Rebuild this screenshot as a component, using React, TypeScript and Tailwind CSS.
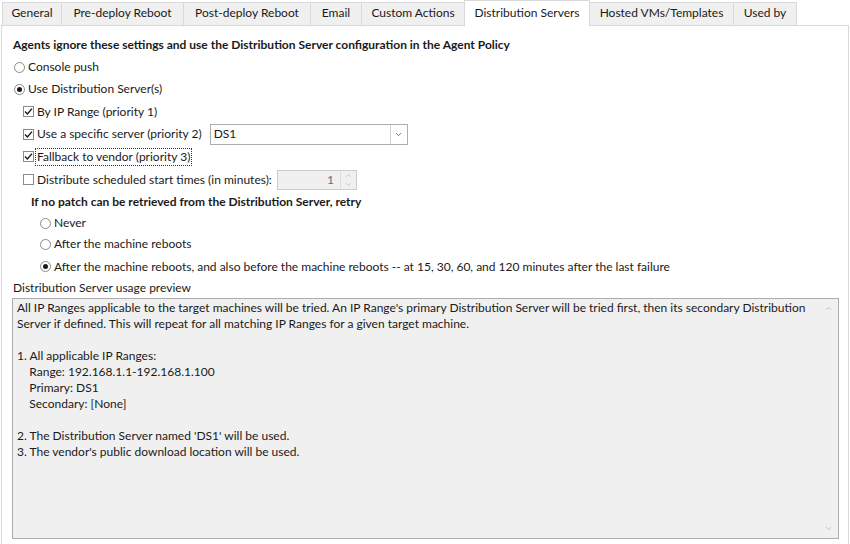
import { ChevronDown, ChevronUp } from "lucide-react"

const tabs = [
  { label: "General", w: "w-[60px]" },
  { label: "Pre-deploy Reboot", w: "w-[123px]" },
  { label: "Post-deploy Reboot", w: "w-[128px]" },
  { label: "Email", w: "w-[52px]" },
  { label: "Custom Actions", w: "w-[104px]" },
  { label: "Distribution Servers", w: "w-[126px]", active: true },
  { label: "Hosted VMs/Templates", w: "w-[145px]" },
  { label: "Used by", w: "w-[64px]" },
]

function Radio({ checked }: { checked?: boolean }) {
  return (
    <span className="flex h-[11px] w-[11px] shrink-0 items-center justify-center rounded-full border border-[#8a8a8a] bg-white">
      {checked && <span className="h-[5px] w-[5px] rounded-full bg-[#1a1a1a]" />}
    </span>
  )
}

function Check({ checked }: { checked?: boolean }) {
  return (
    <span className="flex h-[11px] w-[11px] shrink-0 items-center justify-center border border-[#8a8a8a] bg-white">
      {checked && (
        <svg width="9" height="9" viewBox="0 0 9 9">
          <path d="M1 4.6 L3.4 7 L8 1.6" fill="none" stroke="#1a1a1a" strokeWidth="1.4" />
        </svg>
      )}
    </span>
  )
}

const previewLines = [
  "All IP Ranges applicable to the target machines will be tried. An IP Range's primary Distribution Server will be tried first, then its secondary Distribution",
  "Server if defined. This will repeat for all matching IP Ranges for a given target machine.",
  "",
  "1. All applicable IP Ranges:",
  "    Range: 192.168.1.1-192.168.1.100",
  "    Primary: DS1",
  "    Secondary: [None]",
  "",
  "2. The Distribution Server named 'DS1' will be used.",
  "3. The vendor's public download location will be used.",
]

export default function App() {
  return (
    <div className="h-[544px] w-[850px] overflow-hidden bg-white text-[12px] text-[#1a1a1a] [font-family:Lato,'Liberation_Sans',sans-serif]">
      {/* Tabs */}
      <div className="flex h-[26px] items-end pl-[3px]">
        {tabs.map((t) =>
          t.active ? (
            <div
              key={t.label}
              className={`relative z-10 -ml-px flex h-[26px] items-start justify-center border border-b-0 border-[#d9d9d9] bg-white pt-[3px] ${t.w}`}
            >
              {t.label}
            </div>
          ) : (
            <div
              key={t.label}
              className={`-ml-px flex h-[24px] items-center justify-center border border-[#d9d9d9] bg-[#f0f0f0] pb-[2px] ${t.w}`}
            >
              {t.label}
            </div>
          )
        )}
      </div>

      {/* Panel */}
      <div className="-mt-px ml-px h-[600px] w-[848px] border border-[#d9d9d9] bg-white pt-[8px]">
        <div className="flex h-[22px] items-center pl-[11px] font-bold">
          Agents ignore these settings and use the Distribution Server configuration in the Agent Policy
        </div>
        <div className="flex h-[22px] items-center gap-[3px] pl-[12px]">
          <Radio />
          <span>Console push</span>
        </div>
        <div className="flex h-[22px] items-center gap-[3px] pl-[12px]">
          <Radio checked />
          <span>Use Distribution Server(s)</span>
        </div>
        <div className="flex h-[23px] items-center gap-[3px] pl-[21px]">
          <Check checked />
          <span>By IP Range (priority 1)</span>
        </div>
        <div className="flex h-[22px] items-center gap-[3px] pl-[21px]">
          <Check checked />
          <span>Use a specific server (priority 2)</span>
          <div className="ml-[5px] flex h-[21px] w-[198px] items-center border border-[#adadad] bg-white">
            <span className="flex-1 pl-[3px]">DS1</span>
            <span className="flex h-full w-[17px] items-center justify-center border-l border-[#d4d4d4]">
              <ChevronDown size={9} strokeWidth={2.5} className="text-[#6d6d6d]" />
            </span>
          </div>
        </div>
        <div className="flex h-[23px] items-center gap-[1px] pl-[21px]">
          <Check checked />
          <span className="border border-dotted border-[#333] px-[1px] leading-[16px]">Fallback to vendor (priority 3)</span>
        </div>
        <div className="flex h-[23px] items-center gap-[3px] pl-[21px]">
          <Check />
          <span>Distribute scheduled start times (in minutes):</span>
          <div className="ml-[2px] flex h-[20px] w-[80px] items-center border border-[#cccccc] bg-[#f0f0f0]">
            <span className="flex-1 pr-[6px] text-right text-[#6d6d6d]">1</span>
            <span className="flex h-full w-[16px] flex-col border-l border-[#dcdcdc]">
              <span className="flex flex-1 items-center justify-center">
                <ChevronUp size={7} strokeWidth={2.5} className="text-[#b5b5b5]" />
              </span>
              <span className="flex flex-1 items-center justify-center">
                <ChevronDown size={7} strokeWidth={2.5} className="text-[#b5b5b5]" />
              </span>
            </span>
          </div>
        </div>
        <div className="flex h-[22px] items-center pl-[29px] font-bold">
          If no patch can be retrieved from the Distribution Server, retry
        </div>
        <div className="flex h-[20px] items-center gap-[3px] pl-[38px]">
          <Radio />
          <span>Never</span>
        </div>
        <div className="flex h-[22px] items-center gap-[3px] pl-[38px]">
          <Radio />
          <span>After the machine reboots</span>
        </div>
        <div className="flex h-[23px] items-center gap-[3px] pl-[38px]">
          <Radio checked />
          <span>After the machine reboots, and also before the machine reboots -- at 15, 30, 60, and 120 minutes after the last failure</span>
        </div>
        <div className="flex h-[20px] items-center pl-[11px]">Distribution Server usage preview</div>

        {/* Preview box */}
        <div className="relative ml-[10px] h-[241px] w-[827px] border border-[#adadad] bg-[#f0f0f0] pl-[4px] pt-[1px] leading-[16px]">
          {previewLines.map((line, i) => (
            <div key={i} className="h-[16px] whitespace-pre">
              {line}
            </div>
          ))}
          <ChevronUp size={9} strokeWidth={2} className="absolute right-[5px] top-[5px] text-[#b5b5b5]" />
          <ChevronDown size={9} strokeWidth={2} className="absolute bottom-[5px] right-[5px] text-[#b5b5b5]" />
        </div>
      </div>
    </div>
  )
}
